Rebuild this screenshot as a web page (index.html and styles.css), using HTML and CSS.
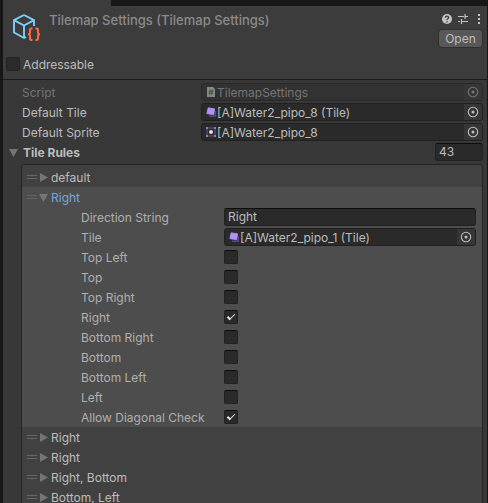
FILE: index.html
```html
<!DOCTYPE html>
<html lang="en">
<head>
<meta charset="utf-8">
<title>Inspector</title>
<link rel="stylesheet" href="styles.css">
</head>
<body>
<svg class="symbols" aria-hidden="true">
  <symbol id="picker" viewBox="0 0 12 12"><circle cx="6" cy="6" r="4.7" fill="none" stroke="currentColor" stroke-width="1.1"/><circle cx="6" cy="6" r="1.5" fill="currentColor"/></symbol>
  <symbol id="tile" viewBox="0 0 12 12"><path d="M4 10.300h6.300V5" fill="none" stroke="#54448a" stroke-width="1.600"/><path d="M3.200 1.800 9.600 2.800 8.600 8.800 1.800 7.600Z" fill="#b392f5" stroke="#b392f5" stroke-width=".8" stroke-linejoin="round"/></symbol>
  <symbol id="sprite" viewBox="0 0 12 12"><path d="M2 2h8v8H2z" fill="none" stroke="#65558f" stroke-width="1"/><path d="M1 1h2v2H1zM9 1h2v2H9zM1 9h2v2H1zM9 9h2v2H9z" fill="#8d75cf"/><circle cx="6" cy="6" r="2" fill="#e0e0e0"/></symbol>
  <symbol id="script" viewBox="0 0 12 12"><path d="M2 1h6l2 2v8H2z" fill="#858a86"/><path d="M5.300 3.500 4.600 8.800M7.400 3.500 6.700 8.800M3.800 5.200h4.600M3.600 7.200h4.600" stroke="#365a3c" stroke-width="1"/></symbol>
  <symbol id="closed" viewBox="0 0 9 9"><path d="M1 0 9 4.500 1 9Z" fill="currentColor"/></symbol>
  <symbol id="opened" viewBox="0 0 9 9"><path d="M0 1h9L4.500 9Z" fill="currentColor"/></symbol>
</svg>
<div class="window">
  <div class="tabbar"><div class="tab"></div></div>
  <main class="panel">
    <header class="header">
      <div class="title-row">
        <svg class="asset-icon" viewBox="0 0 30 30" fill="none" aria-hidden="true">
          <path d="M12 2 22 7.200V13M12 2 2 7.200V19.500L12 25V12.500M2 7.200 12 12.500 22 7.200M12 25l2-1" stroke="#7cd0fa" stroke-width="1.900" stroke-linejoin="round"/>
          <path d="M20.500 15.500h-1q-1.500 0-1.500 1.500v2.500q0 1.700-2 1.700 2 0 2 1.700v2.600q0 1.500 1.500 1.500h1M23.500 15.500h1q1.500 0 1.500 1.500v2.500q0 1.700 2 1.700-2 0-2 1.700v2.600q0 1.500-1.500 1.500h-1" stroke="#ff6b3a" stroke-width="2"/>
        </svg>
        <h1 class="title">Tilemap Settings (Tilemap Settings)</h1>
        <div class="actions">
          <div class="tools">
            <button class="tool" aria-label="Help"><svg viewBox="0 0 12 12"><circle cx="6" cy="6" r="5" fill="#c4c4c4"/><path d="M4.400 4.800q0-1.700 1.600-1.700t1.600 1.400q0 .8-.9 1.300T6 7.200M6 8.200v1.200" fill="none" stroke="#3c3c3c" stroke-width="1.300"/></svg></button>
            <button class="tool" aria-label="Presets"><svg viewBox="0 0 12 12"><path d="M1 3.500h6M8 3.500h3M8 1v5M1 8.500h2M5 8.500h6M4.500 6v5" fill="none" stroke="#c4c4c4" stroke-width="1.200"/></svg></button>
            <button class="tool" aria-label="More"><svg viewBox="0 0 12 12"><path d="M5 1h2v2H5zM5 5h2v2H5zM5 9h2v2H5z" fill="#c4c4c4"/></svg></button>
          </div>
          <button class="open">Open</button>
        </div>
      </div>
      <label class="addressable"><input type="checkbox" class="check faint"><span>Addressable</span></label>
    </header>

    <section class="body">
      <div class="row disabled"><span class="name">Script</span>
        <div class="object"><svg class="type"><use href="#script"/></svg><span class="value">TilemapSettings</span><button class="pick" aria-label="Select script" disabled><svg><use href="#picker"/></svg></button></div></div>
      <div class="row"><span class="name">Default Tile</span>
        <div class="object"><svg class="type"><use href="#tile"/></svg><span class="value">[A]Water2_pipo_8 (Tile)</span><button class="pick" aria-label="Select default tile"><svg><use href="#picker"/></svg></button></div></div>
      <div class="row"><span class="name">Default Sprite</span>
        <div class="object"><svg class="type"><use href="#sprite"/></svg><span class="value">[A]Water2_pipo_8</span><button class="pick" aria-label="Select default sprite"><svg><use href="#picker"/></svg></button></div></div>
      <div class="list-head">
        <button class="fold"><svg class="arrow"><use href="#opened"/></svg><span>Tile Rules</span></button>
        <input class="text count" type="text" value="43" aria-label="Tile rule count">
      </div>

      <ul class="list">
        <li class="item"><span class="grip"></span><button class="fold"><svg class="arrow"><use href="#closed"/></svg><span>default</span></button></li>
        <li class="selected">
          <div class="item"><span class="grip"></span><button class="fold current"><svg class="arrow"><use href="#opened"/></svg><span>Right</span></button></div>
          <div class="row"><label class="name" for="direction">Direction String</label><input class="text" id="direction" type="text" value="Right"></div>
          <div class="row"><span class="name">Tile</span>
            <div class="object"><svg class="type"><use href="#tile"/></svg><span class="value">[A]Water2_pipo_1 (Tile)</span><button class="pick" aria-label="Select tile"><svg><use href="#picker"/></svg></button></div></div>
          <div class="row"><label class="name" for="tl">Top Left</label><input class="check" id="tl" type="checkbox"></div>
          <div class="row"><label class="name" for="t">Top</label><input class="check" id="t" type="checkbox"></div>
          <div class="row"><label class="name" for="tr">Top Right</label><input class="check" id="tr" type="checkbox"></div>
          <div class="row"><label class="name" for="r">Right</label><input class="check" id="r" type="checkbox" checked></div>
          <div class="row"><label class="name" for="br">Bottom Right</label><input class="check" id="br" type="checkbox"></div>
          <div class="row"><label class="name" for="b">Bottom</label><input class="check" id="b" type="checkbox"></div>
          <div class="row"><label class="name" for="bl">Bottom Left</label><input class="check" id="bl" type="checkbox"></div>
          <div class="row"><label class="name" for="l">Left</label><input class="check" id="l" type="checkbox"></div>
          <div class="row"><label class="name" for="diag">Allow Diagonal Check</label><input class="check" id="diag" type="checkbox" checked></div>
        </li>
        <li class="item"><span class="grip"></span><button class="fold"><svg class="arrow"><use href="#closed"/></svg><span>Right</span></button></li>
        <li class="item"><span class="grip"></span><button class="fold"><svg class="arrow"><use href="#closed"/></svg><span>Right</span></button></li>
        <li class="item"><span class="grip"></span><button class="fold"><svg class="arrow"><use href="#closed"/></svg><span>Right, Bottom</span></button></li>
        <li class="item"><span class="grip"></span><button class="fold"><svg class="arrow"><use href="#closed"/></svg><span>Bottom, Left</span></button></li>
      </ul>
    </section>
  </main>
</div>
</body>
</html>
```
FILE: styles.css
```css
* { box-sizing: border-box; }
body {
  margin: 0;
  height: 100vh;
  overflow: hidden;
  background: #171717;
  color: #bdbdbd;
  font: 12px/18px Inter, "Liberation Sans", sans-serif;
}
button, input { font: inherit; color: inherit; margin: 0; }
button { border: 0; padding: 0; background: none; }
.symbols { display: none; }
.window {
  min-height: 100vh;
  padding: 0 1px 0 3px;
}
.tabbar { height: 6px; background: #171717; }
.tab { width: 108px; height: 6px; background: #3c3c3c; }
.panel { background: #383838; }

.header {
  background: #3c3c3c;
  border-bottom: 1px solid #1c1c1c;
  padding: 3px 2px 5px 3px;
}
.title-row { display: flex; height: 45px; }
.asset-icon { width: 30px; height: 30px; margin: 4px 0 0 6px; }
.title {
  flex: 1;
  margin: 1px 0 0 7px;
  font-size: 13px;
  font-weight: 500;
  line-height: 20px;
  color: #8b8b8b;
}
.actions { display: flex; flex-direction: column; align-items: flex-end; gap: 5px; }
.tools { display: flex; gap: 4px; margin-top: 4px; }
.tool, .tool svg { display: block; width: 12px; height: 12px; }
.open {
  width: 43px;
  height: 17px;
  margin-right: 3px;
  border-radius: 3px;
  background: #585858;
  box-shadow: 0 0 0 1px #303030;
  line-height: 17px;
}
.addressable { display: flex; align-items: center; gap: 3px; height: 20px; }

.name, .addressable span, .fold span { padding-top: 2px; }

.check {
  appearance: none;
  width: 14px;
  height: 14px;
  border: 1px solid #212121;
  border-top-color: #0d0d0d;
  border-radius: 2px;
  background: #2a2a2a;
}
.check.faint { border-color: #242424; }
.check:checked::before {
  content: "";
  display: block;
  width: 8px;
  height: 4px;
  margin: 3px 0 0 2px;
  background: linear-gradient(#e8e8e8, #e8e8e8) left / 2px 100% no-repeat,
    linear-gradient(#e8e8e8, #e8e8e8) bottom / 100% 1px no-repeat;
  transform: rotate(-45deg);
}

.body { padding: 2px 4px 0 19px; }
.row {
  display: grid;
  grid-template-columns: 179px 1fr;
  align-items: center;
  height: 20px;
}
.disabled { color: #757575; }
.object {
  display: flex;
  align-items: center;
  height: 18px;
  padding-left: 3px;
  border: 1px solid #202020;
  border-radius: 3px;
  background: #2a2a2a;
  overflow: hidden;
}
.disabled .object { background: #323232; border-color: #2a2a2a; }
.type { width: 12px; height: 12px; }
.value { flex: 1; padding-top: 1px; }
.pick {
  display: grid;
  place-items: center;
  width: 18px;
  height: 16px;
  background: #363636;
}
.pick svg { width: 12px; height: 12px; }
.text {
  width: 100%;
  height: 18px;
  padding: 0 3px;
  border: 1px solid #212121;
  border-top-color: #0d0d0d;
  border-radius: 3px;
  background: #2a2a2a;
}
.list-head {
  display: flex;
  justify-content: space-between;
  align-items: center;
  height: 20px;
  margin-left: -13px;
  font-weight: 700;
}
.count { width: 48px; font-weight: 400; }
.fold { display: flex; align-items: center; gap: 5px; }
.arrow { width: 9px; height: 9px; color: #757575; }
.current { color: #7ba3e4; }

.list {
  margin: 2px 0 0 -1px;
  padding: 2px 0;
  border: 1px solid #242424;
  border-radius: 3px;
  background: #414141;
  list-style: none;
}
.item { display: flex; align-items: center; gap: 2px; height: 20px; padding-left: 5px; }
.item .fold { gap: 3px; }
.grip {
  width: 10px;
  height: 4px;
  border: solid #666;
  border-width: 1px 0;
}
.selected { background: #4d4d4d; }
.selected .row {
  grid-template-columns: 143px 1fr;
  padding: 0 6px 0 59px;
}
.selected .name { color: #b0b0b0; }
```
